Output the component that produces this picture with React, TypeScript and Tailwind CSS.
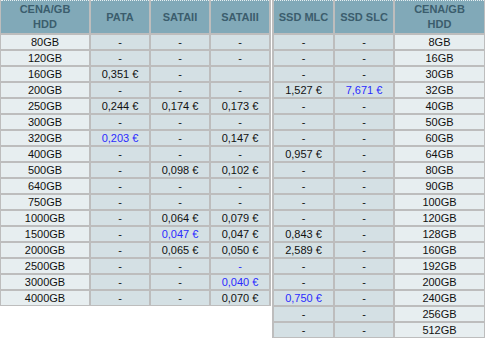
import React from "react";

type Cell = { t: string; b?: boolean };
const c = (t: string, b = false): Cell => ({ t, b });
const d = c("-");

const leftRows: [string, Cell, Cell, Cell][] = [
  ["80GB", d, d, d],
  ["120GB", d, d, d],
  ["160GB", c("0,351 €"), d, c("")],
  ["200GB", d, d, d],
  ["250GB", c("0,244 €"), c("0,174 €"), c("0,173 €")],
  ["300GB", d, d, d],
  ["320GB", c("0,203 €", true), d, c("0,147 €")],
  ["400GB", d, d, d],
  ["500GB", d, c("0,098 €"), c("0,102 €")],
  ["640GB", d, d, d],
  ["750GB", d, d, d],
  ["1000GB", d, c("0,064 €"), c("0,079 €")],
  ["1500GB", d, c("0,047 €", true), c("0,047 €")],
  ["2000GB", d, c("0,065 €"), c("0,050 €")],
  ["2500GB", d, d, c("-", true)],
  ["3000GB", d, d, c("0,040 €", true)],
  ["4000GB", d, d, c("0,070 €")],
];

const rightRows: [Cell, Cell, string][] = [
  [d, d, "8GB"],
  [d, d, "16GB"],
  [d, d, "30GB"],
  [c("1,527 €"), c("7,671 €", true), "32GB"],
  [d, d, "40GB"],
  [d, d, "50GB"],
  [d, d, "60GB"],
  [c("0,957 €"), d, "64GB"],
  [d, d, "80GB"],
  [d, d, "90GB"],
  [d, d, "100GB"],
  [d, d, "120GB"],
  [c("0,843 €"), d, "128GB"],
  [c("2,589 €"), d, "160GB"],
  [d, d, "192GB"],
  [d, d, "200GB"],
  [c("0,750 €", true), d, "240GB"],
  [d, d, "256GB"],
  [d, d, "512GB"],
];

const Head = ({ children }: { children: React.ReactNode }) => (
  <div className="h-[33px] bg-[#81a9b8] border-t border-dotted border-t-[#e8f0f3] flex items-center justify-center text-center font-bold text-[11px] leading-[15px] text-[#3b5d6d]">
    {children}
  </div>
);

const Data = ({ cell }: { cell: Cell }) => (
  <div
    className={`h-[14px] bg-[#d4e0e4] flex items-center justify-center text-[11px] leading-[14px] ${
      cell.b ? "text-[#2b2bff]" : "text-[#111111]"
    }`}
  >
    {cell.t}
  </div>
);

const Size = ({ t }: { t: string }) => (
  <div className="h-[14px] bg-[#e7eef0] flex items-center justify-center text-[11px] leading-[14px] text-[#111111]">
    {t}
  </div>
);

export default function App() {
  return (
    <div
      className="w-[485px] h-[339px] bg-white flex items-start gap-[1px] overflow-hidden"
      style={{ fontFamily: '"Liberation Sans", Arial, sans-serif' }}
    >
      <div className="grid grid-cols-[88px_58px_58px_58px] gap-[2px] bg-[#bdbdbd] pl-[1px] pr-[2px] pb-[1px]">
        <Head>
          <span>
            CENA/GB
            <br />
            HDD
          </span>
        </Head>
        <Head>PATA</Head>
        <Head>SATAII</Head>
        <Head>SATAIII</Head>
        {leftRows.map(([s, a, b, e]) => (
          <React.Fragment key={s}>
            <Size t={s} />
            <Data cell={a} />
            <Data cell={b} />
            <Data cell={e} />
          </React.Fragment>
        ))}
      </div>
      <div className="grid grid-cols-[59px_58px_89px] gap-[2px] bg-[#bdbdbd] pl-[2px] pr-[1px] pb-[1px]">
        <Head>SSD MLC</Head>
        <Head>SSD SLC</Head>
        <Head>
          <span>
            CENA/GB
            <br />
            HDD
          </span>
        </Head>
        {rightRows.map(([a, b, s]) => (
          <React.Fragment key={s}>
            <Data cell={a} />
            <Data cell={b} />
            <Size t={s} />
          </React.Fragment>
        ))}
      </div>
    </div>
  );
}
